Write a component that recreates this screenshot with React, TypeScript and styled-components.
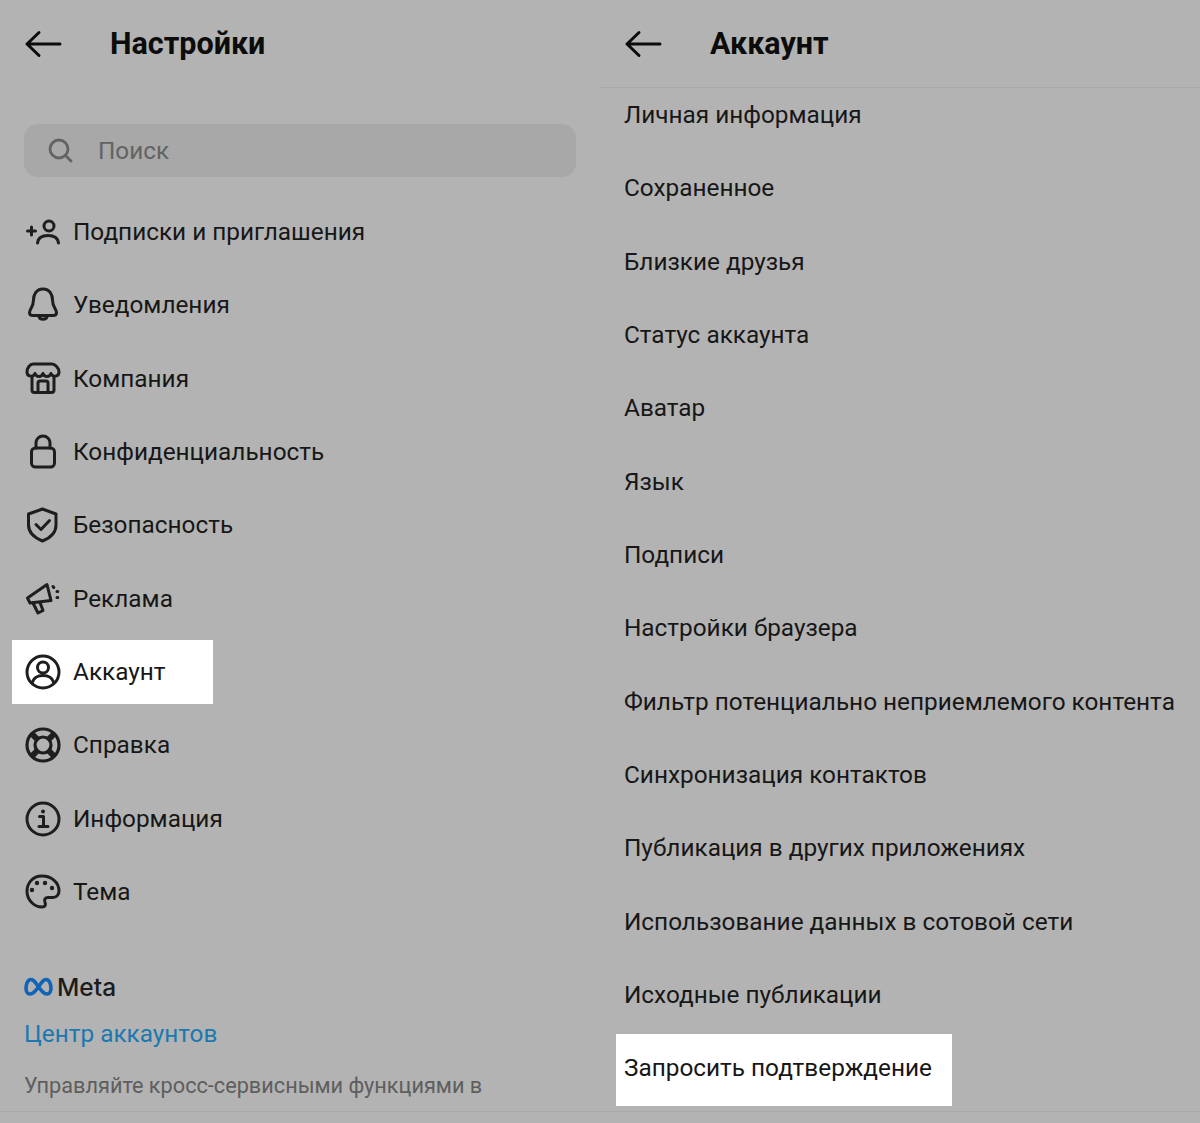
import React from 'react';
import styled, { createGlobalStyle } from 'styled-components';

const GlobalStyle = createGlobalStyle`
    html, body {
        margin: 0;
        padding: 0;
        background: #b3b3b3;
    }
    body {
        font-family: Roboto, "Noto Sans", "Liberation Sans", sans-serif;
    }
`;

const Page = styled.div`
    width: 1200px;
    height: 1123px;
    display: flex;
    flex-direction: column;
    overflow: hidden;
    background: #b3b3b3;
    color: #111;
`;

const Columns = styled.div`
    flex: 1;
    min-height: 0;
    display: flex;
`;

const Column = styled.section`
    width: 600px;
    min-height: 0;
    overflow: hidden;
`;

const Header = styled.header<{ $ruled?: boolean }>`
    height: 88px;
    box-sizing: border-box;
    display: flex;
    align-items: center;
    padding-left: 24px;
    border-bottom: 1px solid ${(p) => (p.$ruled ? '#a9a9a9' : 'transparent')};
`;

const BackIcon = styled.svg`
    width: 38px;
    height: 30px;
    flex: none;
    fill: none;
    stroke: #0c0c0c;
    stroke-width: 3;
    stroke-linecap: round;
    stroke-linejoin: round;
`;

const Title = styled.h1`
    margin: 1px 0 0 48px;
    font-size: 30.5px;
    line-height: 34px;
    font-weight: 700;
    color: #0c0c0c;
`;

const SearchBox = styled.div`
    height: 53px;
    margin: 36px 24px 40px;
    padding-left: 24px;
    display: flex;
    align-items: center;
    border-radius: 14px;
    background: #a8a8a8;
    color: #636363;
    font-size: 24.3px;
`;

const SearchIcon = styled.svg`
    width: 26px;
    height: 28px;
    margin-right: 24px;
    flex: none;
    fill: none;
    stroke: #636363;
    stroke-width: 2.8;
    stroke-linecap: round;
`;

const List = styled.ul<{ $top?: number }>`
    list-style: none;
    margin: 0;
    padding: ${(p) => p.$top ?? 0}px 0 0 24px;
    display: flex;
    flex-direction: column;
    row-gap: 43.33px;
`;

const Item = styled.li<{ $active?: boolean; $padTop: number; $padBottom: number; $right: number; $left: number }>`
    height: 30px;
    width: fit-content;
    display: flex;
    align-items: center;
    font-size: 24.35px;
    line-height: 30px;
    white-space: nowrap;
    color: #171717;
    ${(p) =>
        p.$active &&
        `
        background: #fff;
        padding: ${p.$padTop}px ${p.$right}px ${p.$padBottom}px ${p.$left}px;
        margin: -${p.$padTop}px 0 -${p.$padBottom}px -${p.$left}px;
    `}
`;

const IconBox = styled.svg`
    width: 36px;
    height: 36px;
    margin: -3px 12px -3px 1px;
    flex: none;
    fill: none;
    stroke: #1e1e1e;
    stroke-width: 3;
    stroke-linecap: round;
    stroke-linejoin: round;
`;

const AccountsBlock = styled.div`
    margin: 65px 0 0 24px;
`;

const MetaRow = styled.div`
    display: flex;
    align-items: center;
    height: 30px;
    column-gap: 4px;
`;

const MetaLogo = styled.svg`
    width: 29px;
    height: 20px;
    flex: none;
    fill: none;
    stroke-width: 3.6;
`;

const MetaName = styled.span`
    font-family: Inter, Roboto, sans-serif;
    font-size: 24.5px;
    font-weight: 500;
    color: #1c1c1c;
`;

const AccountsLink = styled.a`
    display: block;
    margin-top: 17px;
    font-size: 24.35px;
    line-height: 30px;
    color: #1b78b1;
`;

const AccountsText = styled.p`
    margin: 18px 0 0;
    width: 500px;
    font-size: 21.7px;
    line-height: 38px;
    color: #5e5e5e;
`;

const BottomBar = styled.div`
    height: 12px;
    flex: none;
    background: #b3b3b3;
    border-top: 1px solid #a9a9a9;
    box-sizing: border-box;
`;

const Back = () => (
    <BackIcon viewBox="0 0 38 30">
        <path d="M36 15H3M15 3.500 3 15l12 11.500" />
    </BackIcon>
);

const icons: Record<string, React.ReactNode> = {
    follow: (
        <>
            <path d="M2.500 17h8M6.500 13v8" />
            <circle cx="24" cy="12" r="5" />
            <path d="M12.500 29c.5-5 4.500-7.500 10.500-7.500S33 24 33.500 29" />
        </>
    ),
    bell: (
        <>
            <path d="M18 2c-7 0-9.500 6-9.500 11 0 7-4 9-4 12.500 0 2 1.500 3 3.500 3h20c2 0 3.500-1 3.500-3 0-3.500-4-5.500-4-12.500 0-5-2.500-11-9.500-11Z" />
            <path d="M14 29.500c.5 3.500 7.500 3.500 8 0" />
        </>
    ),
    store: (
        <>
            <path d="M8 3h19c3 0 7 4 7 8 0 5-6.500 5.500-8 1.500-1.500 4-6.500 4-8 0-1.500 4-6.500 4-8 0C8.500 16.500 2 16 2 11c0-4 3-8 6-8Z" />
            <path d="M7 17v12a2.500 2.500 0 0 0 2.500 2.500h17A2.500 2.500 0 0 0 29 29V17" />
            <path d="M13 31v-9a2 2 0 0 1 2-2h6a2 2 0 0 1 2 2v9" />
        </>
    ),
    lock: (
        <>
            <rect x="6.500" y="14" width="23" height="19" rx="4" />
            <path d="M11 14V9a7 7 0 0 1 14 0v5" />
        </>
    ),
    shield: (
        <>
            <path d="M17.500 2 31 7v11c0 8-6 13-13.500 16C10 31 3.500 26 3.500 18V7Z" />
            <path d="m11 17.500 5 5 8.500-9" />
        </>
    ),
    ads: (
        <>
            <path d="M2.500 17 22 3.500 26 19.500 5 22Z" />
            <path d="m8 22 5 10 5-2.500-3-8" />
            <path d="M28 5.500l.8 1M32 10.500h.8M32 16.500h.8" />
        </>
    ),
    account: (
        <>
            <circle cx="18" cy="18" r="16" />
            <circle cx="18" cy="13.500" r="5.500" />
            <path d="M7.500 28c1.500-4.500 5-6.500 10.500-6.500S27 23.500 28.500 28" />
        </>
    ),
    help: (
        <>
            <circle cx="18" cy="18" r="16" strokeWidth="3.200" />
            <circle cx="18" cy="18" r="8" strokeWidth="3.200" />
            <path d="m7 7 5.500 5.500M29 7l-5.500 5.500M7 29l5.500-5.500M29 29l-5.500-5.500" strokeWidth="6" strokeLinecap="butt" />
        </>
    ),
    info: (
        <>
            <circle cx="18" cy="18" r="16" />
            <path d="M14.500 15.500H18.500V25M14 25.500h9" />
            <circle cx="18" cy="10.500" r="2" fill="#1e1e1e" stroke="none" />
        </>
    ),
    theme: (
        <>
            <path d="M17 2C7 2 2 10 2 17c0 10 8 16 15 16 3.500 0 4-2.500 3-4.500-1.500-3 .5-5 3-5h5c4 0 6-3.500 6-6.500C34 8 26 2 17 2Z" />
            <g fill="#1e1e1e" stroke="none">
                <circle cx="7" cy="16" r="2.200" />
                <circle cx="12" cy="9" r="2.200" />
                <circle cx="20" cy="9" r="2.200" />
                <circle cx="27" cy="14" r="2.200" />
            </g>
        </>
    ),
};

const settings = [
    { icon: 'follow', label: 'Подписки и приглашения' },
    { icon: 'bell', label: 'Уведомления' },
    { icon: 'store', label: 'Компания' },
    { icon: 'lock', label: 'Конфиденциальность' },
    { icon: 'shield', label: 'Безопасность' },
    { icon: 'ads', label: 'Реклама' },
    { icon: 'account', label: 'Аккаунт', active: true },
    { icon: 'help', label: 'Справка' },
    { icon: 'info', label: 'Информация' },
    { icon: 'theme', label: 'Тема' },
];

const accountItems = [
    'Личная информация',
    'Сохраненное',
    'Близкие друзья',
    'Статус аккаунта',
    'Аватар',
    'Язык',
    'Подписи',
    'Настройки браузера',
    'Фильтр потенциально неприемлемого контента',
    'Синхронизация контактов',
    'Публикация в других приложениях',
    'Использование данных в сотовой сети',
    'Исходные публикации',
    'Запросить подтверждение',
];

export default function App() {
    return (
        <Page>
            <GlobalStyle />
            <Columns>
                <Column>
                    <Header>
                        <Back />
                        <Title>Настройки</Title>
                    </Header>
                    <SearchBox>
                        <SearchIcon viewBox="0 0 26 28">
                            <circle cx="11" cy="12" r="9" />
                            <path d="m18 19 5 5" />
                        </SearchIcon>
                        Поиск
                    </SearchBox>
                    <List>
                        {settings.map((item) => (
                            <Item key={item.icon} $active={item.active} $padTop={17} $padBottom={17} $left={12} $right={47}>
                                <IconBox viewBox="0 0 36 36">{icons[item.icon]}</IconBox>
                                {item.label}
                            </Item>
                        ))}
                    </List>
                    <AccountsBlock>
                        <MetaRow>
                            <MetaLogo viewBox="0 0 29 20">
                                <path
                                    stroke="#1163b5"
                                    d="M14.500 10C11 4.500 9.500 2.500 7 2.500 4 2.500 2 6.500 2 11c0 3.500 1.500 6 4 6 3 0 5-2.500 8.500-7 3.500 4.500 5.500 7 8.500 7 2.500 0 4-2.500 4-6 0-4.500-2-8.500-5-8.500-2.500 0-4 2-7.500 7.500Z"
                                />
                            </MetaLogo>
                            <MetaName>Meta</MetaName>
                        </MetaRow>
                        <AccountsLink>Центр аккаунтов</AccountsLink>
                        <AccountsText>Управляйте кросс-сервисными функциями в приложениях и на сайтах</AccountsText>
                    </AccountsBlock>
                </Column>
                <Column>
                    <Header $ruled>
                        <Back />
                        <Title>Аккаунт</Title>
                    </Header>
                    <List $top={12}>
                        {accountItems.map((label, i) => (
                            <Item key={label} $active={i === accountItems.length - 1} $padTop={19} $padBottom={23} $left={8} $right={20}>
                                {label}
                            </Item>
                        ))}
                    </List>
                </Column>
            </Columns>
            <BottomBar />
        </Page>
    );
}
